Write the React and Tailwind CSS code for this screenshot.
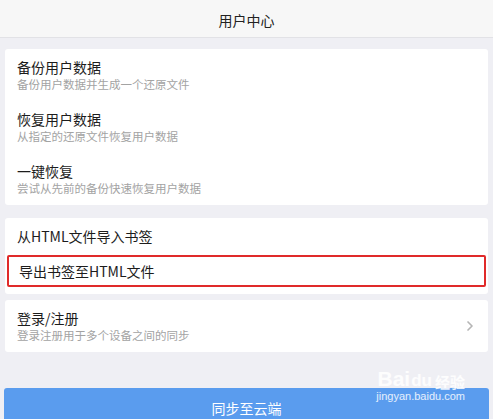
import { ChevronRight } from 'lucide-react';

const font = { fontFamily: '"Noto Sans CJK SC", "Noto Sans", sans-serif' };
const latin = { fontFamily: '"Liberation Sans", "Noto Sans CJK SC", sans-serif' };

function Item({ title, desc }) {
  return (
    <div className="px-3 h-[52px] flex flex-col justify-center">
      <div className="text-[14px] leading-[18px] text-[#1c1c1c]">{title}</div>
      <div className="text-[11.5px] leading-[15px] text-[#a3a3a3] mt-[1px]">{desc}</div>
    </div>
  );
}

export default function App() {
  return (
    <div style={font} className="w-[493px] h-[419px] overflow-hidden bg-[#efeff4] relative">
      <div className="h-[38px] bg-[#f7f7f7] border-b border-[#e2e2e6] flex items-center justify-center">
        <span className="text-[14px] text-[#222] mt-[3px]">用户中心</span>
      </div>

      <div className="px-[5px] pt-[11px]">
        <div className="bg-white rounded-[3px]">
          <Item title="备份用户数据" desc="备份用户数据并生成一个还原文件" />
          <Item title="恢复用户数据" desc="从指定的还原文件恢复用户数据" />
          <Item title="一键恢复" desc="尝试从先前的备份快速恢复用户数据" />
        </div>

        <div className="bg-white rounded-[3px] mt-[13px] pt-[1px] pb-[7px]">
          <div className="h-[34px] px-3 flex items-center text-[14px] text-[#1c1c1c]">从HTML文件导入书签</div>
          <div className="h-[32px] mt-[2px] mx-[2px] px-[10px] flex items-center text-[14px] text-[#1c1c1c] border-2 border-[#e02a2a] rounded-[2px]">
            导出书签至HTML文件
          </div>
        </div>

        <div className="bg-white rounded-[3px] mt-[6px] h-[52px] flex items-center justify-between pr-[10px]">
          <div className="px-3 flex flex-col">
            <div className="text-[14px] leading-[18px] text-[#1c1c1c]">登录/注册</div>
            <div className="text-[11.5px] leading-[15px] text-[#a3a3a3] mt-[1px]">登录注册用于多个设备之间的同步</div>
          </div>
          <ChevronRight className="w-[16px] h-[16px] text-[#b5b5b5]" strokeWidth={2.5} />
        </div>

        <div className="mt-[36px] h-[44px] bg-[#5a9cee] rounded-[3px] flex justify-center pt-[11px] text-white text-[14px] leading-[18px] mx-[-1px]">
          <span>同步至云端</span>
        </div>
      </div>

      <div className="absolute right-[28px] top-[368px] flex flex-col items-end text-white/85 pointer-events-none">
        <div className="flex items-end leading-none">
          <span className="text-[21px] font-bold" style={latin}>Bai</span>
          <span className="text-[17px] font-bold ml-[1px]" style={latin}>du</span>
          <span className="text-[15px] font-bold ml-[3px]">经验</span>
        </div>
        <div className="text-[11px] leading-[13px] mt-[1px]" style={latin}>jingyan.baidu.com</div>
      </div>
    </div>
  );
}
